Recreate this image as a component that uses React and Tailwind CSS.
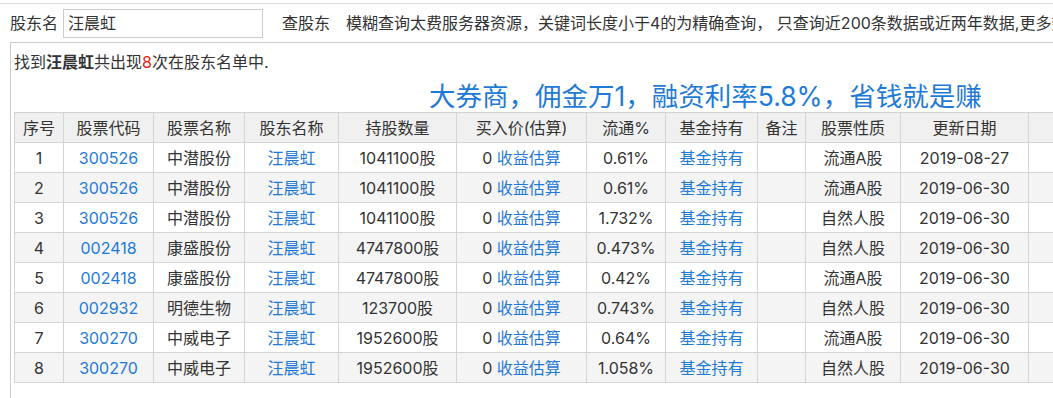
import React from "react";

const cols = [49, 90, 91, 94, 118, 130, 79, 92, 48, 95, 128, 80];
const heads = ["序号", "股票代码", "股票名称", "股东名称", "持股数量", "买入价(估算)", "流通%", "基金持有", "备注", "股票性质", "更新日期", ""];

const rows = [
  ["1", "300526", "中潜股份", "1041100股", "0.61%", "流通A股", "2019-08-27"],
  ["2", "300526", "中潜股份", "1041100股", "0.61%", "流通A股", "2019-06-30"],
  ["3", "300526", "中潜股份", "1041100股", "1.732%", "自然人股", "2019-06-30"],
  ["4", "002418", "康盛股份", "4747800股", "0.473%", "自然人股", "2019-06-30"],
  ["5", "002418", "康盛股份", "4747800股", "0.42%", "流通A股", "2019-06-30"],
  ["6", "002932", "明德生物", "123700股", "0.743%", "自然人股", "2019-06-30"],
  ["7", "300270", "中威电子", "1952600股", "0.64%", "流通A股", "2019-06-30"],
  ["8", "300270", "中威电子", "1952600股", "1.058%", "自然人股", "2019-06-30"],
];

const td = "border border-[#d4d4d4] h-[30px] px-1 text-center whitespace-nowrap";

export default function App() {
  return (
    <div
      className="w-[1053px] h-[398px] overflow-hidden bg-white text-[16px] text-[#333]"
      style={{ fontFamily: '"Inter", "Noto Sans CJK SC", sans-serif' }}
    >
      <div className="mt-[3px] border-t border-[#dddddd] h-[39px] flex items-center pl-[10px] whitespace-nowrap">
        <span className="shrink-0">股东名</span>
        <div className="shrink-0 ml-[5px] w-[200px] h-[29px] border border-[#cccccc] flex items-center pl-[4px]">汪晨虹</div>
        <span className="shrink-0 ml-[19px]">查股东</span>
        <span className="shrink-0 ml-[16px]">模糊查询太费服务器资源，关键词长度小于4的为精确查询， 只查询近200条数据或近两年数据,更多数据请联系</span>
      </div>

      <div className="ml-[10px] border-l border-t border-[#cccccc] h-[400px] pl-[3px]">
        <p className="pt-[8px] leading-[22px]">
          找到<b>汪晨虹</b>共出现<span className="text-[#e02020]">8</span>次在股东名单中.
        </p>
        <p className="pl-[415px] mt-[8px] text-[26.5px] leading-[30px] text-[#1f7ad6] whitespace-nowrap">
          大券商，佣金万1，融资利率5.8%，省钱就是赚
        </p>
        <table className="border-collapse table-fixed mt-[1px]" style={{ width: cols.reduce((a, b) => a + b, 0) }}>
          <colgroup>
            {cols.map((w, i) => <col key={i} style={{ width: w }} />)}
          </colgroup>
          <thead>
            <tr className="bg-[#f0f0f0]">
              {heads.map((h, i) => <th key={i} className={`${td} font-normal`}>{h}</th>)}
            </tr>
          </thead>
          <tbody>
            {rows.map((r, i) => (
              <tr key={i} className={i % 2 ? "bg-[#f4f4f4]" : "bg-white"}>
                <td className={td}>{r[0]}</td>
                <td className={`${td} text-[#1f7ad6]`}>{r[1]}</td>
                <td className={td}>{r[2]}</td>
                <td className={`${td} text-[#1f7ad6]`}>汪晨虹</td>
                <td className={td}>{r[3]}</td>
                <td className={td}>0 <span className="text-[#1f7ad6]">收益估算</span></td>
                <td className={td}>{r[4]}</td>
                <td className={`${td} text-[#1f7ad6]`}>基金持有</td>
                <td className={td}></td>
                <td className={td}>{r[5]}</td>
                <td className={td}>{r[6]}</td>
                <td className={td}></td>
              </tr>
            ))}
          </tbody>
        </table>
      </div>
    </div>
  );
}
